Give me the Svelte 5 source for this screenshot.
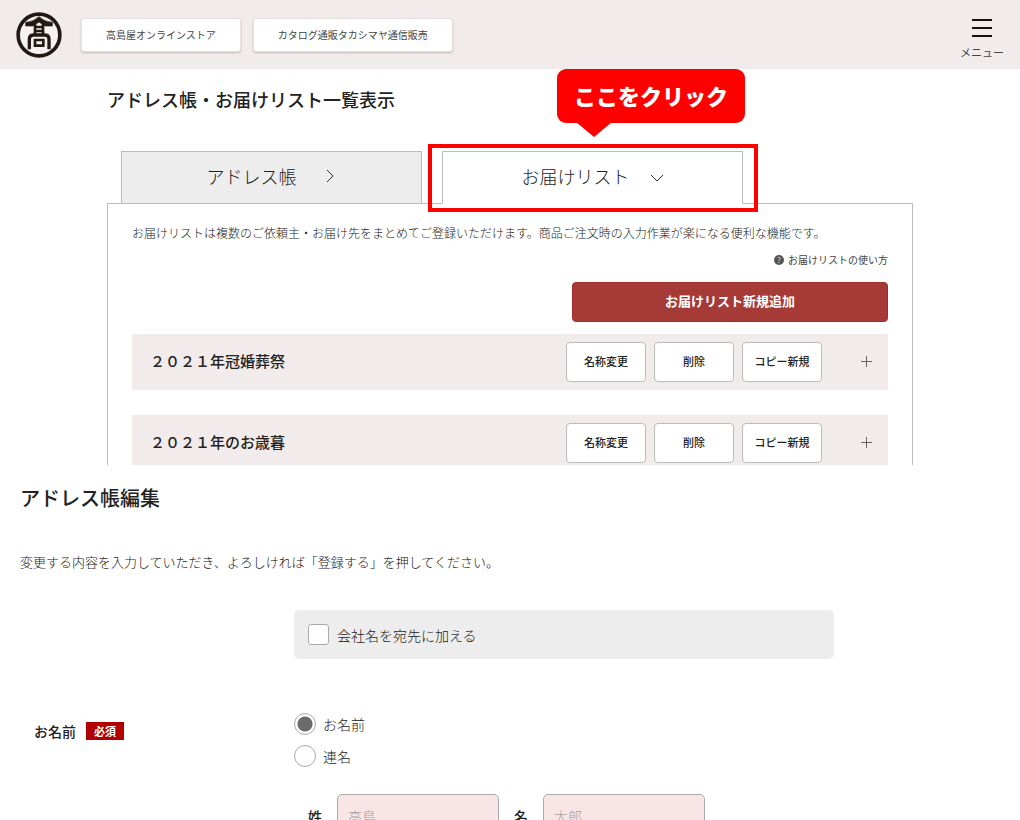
<script lang="ts">
	interface DeliveryList {
		id: number;
		name: string;
	}

	const stores = ['高島屋オンラインストア', 'カタログ通販タカシマヤ通信販売'];

	const lists: DeliveryList[] = [
		{ id: 1, name: '２０２１年冠婚葬祭' },
		{ id: 2, name: '２０２１年のお歳暮' }
	];

	const actions = ['名称変更', '削除', 'コピー新規'];

	let withCompany = $state(false);
	let nameType = $state('single');
	let lastName = $state('');
	let firstName = $state('');
</script>

<div class="page">
	<header class="site-header">
		<a href="#top" class="logo" aria-label="髙島屋">
			<svg viewBox="0 0 138 138" fill="none" stroke="#231815">
				<circle cx="69" cy="69" r="62.5" fill="#fff" fill-opacity="0.35" stroke-width="11" />
				<!-- roof -->
				<path
					d="M69 14Q52 30 29 31V42H51L69 30L87 42H109V31Q86 30 69 14Z"
					fill="#231815"
					stroke-width="2"
					stroke-linejoin="round"
				/>
				<!-- ladder -->
				<path d="M57 30V70M81 30V70M57 45H81M57 57H81" stroke-width="8" />
				<!-- gate -->
				<path d="M40 112V82Q40 69 52 69H87Q99 69 99 82V112" stroke-width="10" />
				<path d="M57 84H82V101H57Z" stroke-width="8" />
			</svg>
		</a>
		<nav class="stores">
			{#each stores as store}
				<a href="#store" class="store-link">{store}</a>
			{/each}
		</nav>
		<button class="menu-btn">
			<span class="burger"></span>
			メニュー
		</button>
	</header>

	<section class="lists">
		<h1>アドレス帳・お届けリスト一覧表示</h1>

		<div class="tabs">
			<button class="tab">
				アドレス帳
				<svg class="chevron" viewBox="0 0 14 14"><path d="M4 1L10 7L4 13" /></svg>
			</button>
			<div class="tab-wrap">
				<button class="tab active">
					お届けリスト
					<svg class="chevron" viewBox="0 0 14 14"><path d="M1 6L7 12L13 6" /></svg>
				</button>
				<span class="highlight"></span>
				<span class="callout">ここをクリック</span>
			</div>
		</div>

		<div class="panel">
			<p class="intro">お届けリストは複数のご依頼主・お届け先をまとめてご登録いただけます。商品ご注文時の入力作業が楽になる便利な機能です。</p>
			<a href="#help" class="help"><span class="help-icon">?</span>お届けリストの使い方</a>
			<button class="add-btn">お届けリスト新規追加</button>

			{#each lists as list (list.id)}
				<div class="list-row">
					<h2>{list.name}</h2>
					{#each actions as action}
						<button class="action-btn">{action}</button>
					{/each}
					<button class="expand" aria-label="開く"></button>
				</div>
			{/each}
		</div>
	</section>

	<section class="edit">
		<h2>アドレス帳編集</h2>
		<p class="lead">変更する内容を入力していただき、よろしければ「登録する」を押してください。</p>

		<form class="form">
			<label class="company">
				<input type="checkbox" bind:checked={withCompany} />
				会社名を宛先に加える
			</label>

			<div class="field-title">お名前<span class="required">必須</span></div>
			<div class="field">
				<label class="radio">
					<input type="radio" name="name-type" value="single" bind:group={nameType} />
					お名前
				</label>
				<label class="radio">
					<input type="radio" name="name-type" value="joint" bind:group={nameType} />
					連名
				</label>
				<div class="names">
					<label for="last-name">姓</label>
					<input id="last-name" type="text" placeholder="高島" bind:value={lastName} />
					<label for="first-name">名</label>
					<input id="first-name" type="text" placeholder="太郎" bind:value={firstName} />
				</div>
			</div>
		</form>
	</section>
</div>

<style>
	:global(body) {
		margin: 0;
		background: #fff;
	}

	.page {
		height: 100vh;
		overflow: hidden;
		font-family: "Noto Sans CJK JP", sans-serif;
		color: #222;
	}

	.page * {
		box-sizing: border-box;
	}

	button,
	input {
		font-family: inherit;
		color: inherit;
	}

	button {
		padding: 0;
		cursor: pointer;
	}

	a {
		color: inherit;
		text-decoration: none;
	}

	h1,
	h2,
	p {
		margin: 0;
	}

	/* Header */
	.site-header {
		display: flex;
		align-items: center;
		height: 69px;
		padding: 0 16px;
		background: #f1ebeb;
	}

	.logo {
		width: 46px;
		height: 46px;
	}

	.logo svg {
		display: block;
	}

	.stores {
		display: flex;
		gap: 12px;
		margin-left: 19px;
	}

	.store-link {
		padding: 0 24px;
		border: 1px solid #e6e0e0;
		border-radius: 3px;
		background: #fff;
		box-shadow: 0 1px 2px rgba(0, 0, 0, 0.2);
		color: #444;
		font-size: 10px;
		line-height: 32px;
	}

	.menu-btn {
		display: flex;
		flex-direction: column;
		align-items: center;
		gap: 7px;
		margin-left: auto;
		padding-top: 10px;
		border: none;
		background: none;
		color: #444;
		font-size: 11px;
		line-height: 16px;
	}

	.burger {
		width: 20px;
		height: 18px;
		border-top: 2px solid #111;
		border-bottom: 2px solid #111;
		background: linear-gradient(#111, #111) center / 100% 2px no-repeat;
	}

	/* List section */
	.lists {
		max-width: 806px;
		margin: 0 auto;
		padding-top: 17px;
	}

	h1 {
		font-size: 18px;
		font-weight: 500;
		line-height: 26px;
	}

	.tabs {
		display: flex;
		gap: 20px;
		margin: 39px 0 -1px 14px;
	}

	.tab-wrap {
		position: relative;
	}

	.tab {
		display: flex;
		align-items: center;
		justify-content: center;
		gap: 26px;
		width: 301px;
		height: 53px;
		padding-bottom: 4px;
		border: 1px solid #bbb;
		background: #ededed;
		font-size: 18px;
		font-weight: 300;
	}

	.tab.active {
		gap: 20px;
		border-bottom-color: #fff;
		background: #fff;
	}

	.tab-wrap .tab {
		position: relative;
		z-index: 1;
	}

	.chevron {
		width: 14px;
		height: 14px;
		fill: none;
		stroke: #333;
		stroke-width: 1;
	}

	.highlight {
		position: absolute;
		z-index: 2;
		inset: -7px -15px -8px -14px;
		border: 4px solid #f00;
		pointer-events: none;
	}

	.callout {
		position: absolute;
		top: -82px;
		left: 115px;
		width: 188px;
		height: 54px;
		border-radius: 9px;
		background: #f00;
		color: #fff;
		font-size: 22px;
		font-weight: 900;
		line-height: 52px;
		text-align: center;
		white-space: nowrap;
	}

	.callout::after {
		content: "";
		position: absolute;
		top: 53px;
		left: 19px;
		border: 18px solid transparent;
		border-top: 15px solid #f00;
		border-bottom: none;
	}

	.panel {
		display: flex;
		flex-direction: column;
		padding: 20px 24px 0;
		border: 1px solid #bbb;
		border-bottom: none;
	}

	.intro {
		font-size: 12px;
		font-weight: 300;
		line-height: 18px;
	}

	.help {
		display: flex;
		align-items: center;
		align-self: flex-end;
		gap: 4px;
		margin-top: 10px;
		color: #444;
		font-size: 10px;
		line-height: 16px;
	}

	.help-icon {
		width: 10px;
		height: 10px;
		border-radius: 50%;
		background: #555;
		color: #ddd;
		font-size: 8px;
		line-height: 10px;
		text-align: center;
	}

	.add-btn {
		align-self: flex-end;
		width: 316px;
		height: 40px;
		margin: 14px 0 12px;
		padding-bottom: 3px;
		border: 1px solid #a02c2c;
		border-radius: 4px;
		background: #a63a37;
		color: #fff;
		font-size: 13px;
		font-weight: 700;
	}

	.list-row {
		display: flex;
		align-items: center;
		gap: 8px;
		padding: 8px 12px 8px 18px;
		background: #f1ebeb;
	}

	.list-row + .list-row {
		margin-top: 25px;
		padding-bottom: 2px;
	}

	.list-row h2 {
		flex: 1;
		padding-bottom: 2px;
		font-size: 15px;
		font-weight: 500;
		line-height: 20px;
	}

	.action-btn {
		width: 80px;
		height: 40px;
		padding-bottom: 2px;
		border: 1px solid #bbb;
		border-radius: 4px;
		background: #fff;
		font-size: 11px;
		font-weight: 500;
	}

	.expand {
		width: 20px;
		height: 20px;
		margin: 0 0 2px 26px;
		border: none;
		background:
			linear-gradient(#666, #666) center / 11px 1px no-repeat,
			linear-gradient(#666, #666) center / 1px 11px no-repeat;
	}

	/* Edit section */
	.edit {
		padding: 19px 20px 0;
	}

	.edit h2 {
		font-size: 20px;
		font-weight: 500;
		line-height: 28px;
	}

	.lead {
		margin-top: 40px;
		font-size: 13px;
		font-weight: 300;
		line-height: 20px;
	}

	.form {
		display: grid;
		grid-template-columns: 274px minmax(0, 540px);
		row-gap: 54px;
		margin-top: 38px;
		font-size: 14px;
		line-height: 22px;
	}

	.company {
		display: flex;
		grid-column: 2;
		align-items: center;
		gap: 8px;
		height: 49px;
		padding: 0 14px;
		border-radius: 5px;
		background: #ededed;
		font-weight: 300;
	}

	.company input {
		width: 21px;
		height: 21px;
		margin: 0;
		border: 1px solid #aaa;
		border-radius: 3px;
		background: #fff;
		appearance: none;
	}

	.company input:checked {
		background: #666;
	}

	.field-title {
		display: flex;
		align-items: center;
		align-self: start;
		gap: 10px;
		padding: 7px 0 0 14px;
		font-weight: 500;
	}

	.required {
		padding: 0 8px;
		background: #b00000;
		color: #fff;
		font-size: 11px;
		font-weight: 700;
		line-height: 18px;
	}

	.field {
		display: flex;
		flex-direction: column;
		gap: 10px;
	}

	.radio {
		display: flex;
		align-items: center;
		gap: 7px;
		font-weight: 300;
	}

	.radio input {
		width: 22px;
		height: 22px;
		margin: 0;
		border: 1px solid #aaa;
		border-radius: 50%;
		background: #fff;
		appearance: none;
	}

	.radio input:checked {
		background: radial-gradient(circle, #6b6b6b 7px, #fff 8px);
	}

	.names {
		display: flex;
		align-items: center;
		gap: 15px;
		margin: 17px 0 0 14px;
		font-weight: 500;
	}

	.names input {
		width: 162px;
		height: 44px;
		padding: 0 10px;
		border: 1px solid #aaa;
		border-radius: 5px;
		background: #f8e6e6;
		font-size: 14px;
		font-weight: 300;
	}

	.names input::placeholder {
		color: #a8a0a0;
		opacity: 1;
	}
</style>
